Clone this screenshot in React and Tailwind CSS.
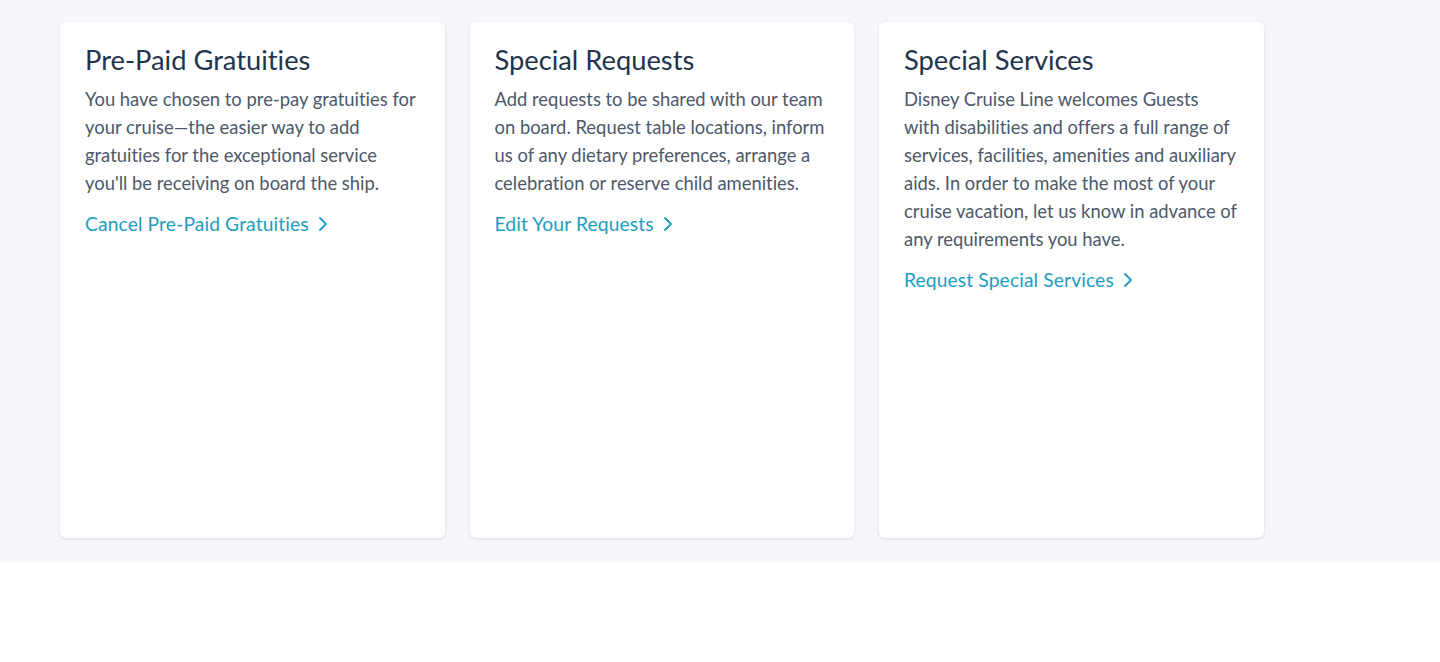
import React from 'react';

const cards = [
  {
    title: 'Pre-Paid Gratuities',
    body: "You have chosen to pre-pay gratuities for your cruise\u2014the easier way to add gratuities for the exceptional service you'll be receiving on board the ship.",
    link: 'Cancel Pre-Paid Gratuities',
  },
  {
    title: 'Special Requests',
    body: 'Add requests to be shared with our team on board. Request table locations, inform us of any dietary preferences, arrange a celebration or reserve child amenities.',
    link: 'Edit Your Requests',
  },
  {
    title: 'Special Services',
    body: 'Disney Cruise Line welcomes Guests with disabilities and offers a full range of services, facilities, amenities and auxiliary aids. In order to make the most of your cruise vacation, let us know in advance of any requirements you have.',
    link: 'Request Special Services',
  },
];

function Chevron() {
  return (
    <svg width="10" height="16" viewBox="0 0 10 16" fill="none" className="ml-[9px] inline-block">
      <path d="M2 2l6 6-6 6" stroke="currentColor" strokeWidth="1.8" strokeLinecap="round" strokeLinejoin="round" />
    </svg>
  );
}

function Card({ title, body, link }) {
  return (
    <div className="w-[384.5px] h-[516px] shrink-0 rounded-[6px] bg-white shadow-[0_1px_3px_rgba(40,50,80,0.14)] pl-[25px] pr-[26px] pt-[22px]">
      <h2 className="text-[27.3px] leading-[32px] text-[#22344d] font-normal">{title}</h2>
      <p className="mt-[9px] text-[18.4px] leading-[28px] text-[#4d5869]">{body}</p>
      <a href="#" className="mt-[13px] flex items-center text-[19.3px] leading-[28px] tracking-[0.1px] text-[#1d9dc2]">
        {link}
        <Chevron />
      </a>
    </div>
  );
}

export default function App() {
  return (
    <div className="min-h-[662px] bg-white font-['Lato','Noto_Sans',sans-serif] [font-variant-ligatures:none]">
      <div className="bg-[#f6f7fb] h-[562px] pt-[22px] pl-[60px]">
        <div className="flex gap-[25px]">
          {cards.map((c) => (
            <Card key={c.title} {...c} />
          ))}
        </div>
      </div>
    </div>
  );
}
